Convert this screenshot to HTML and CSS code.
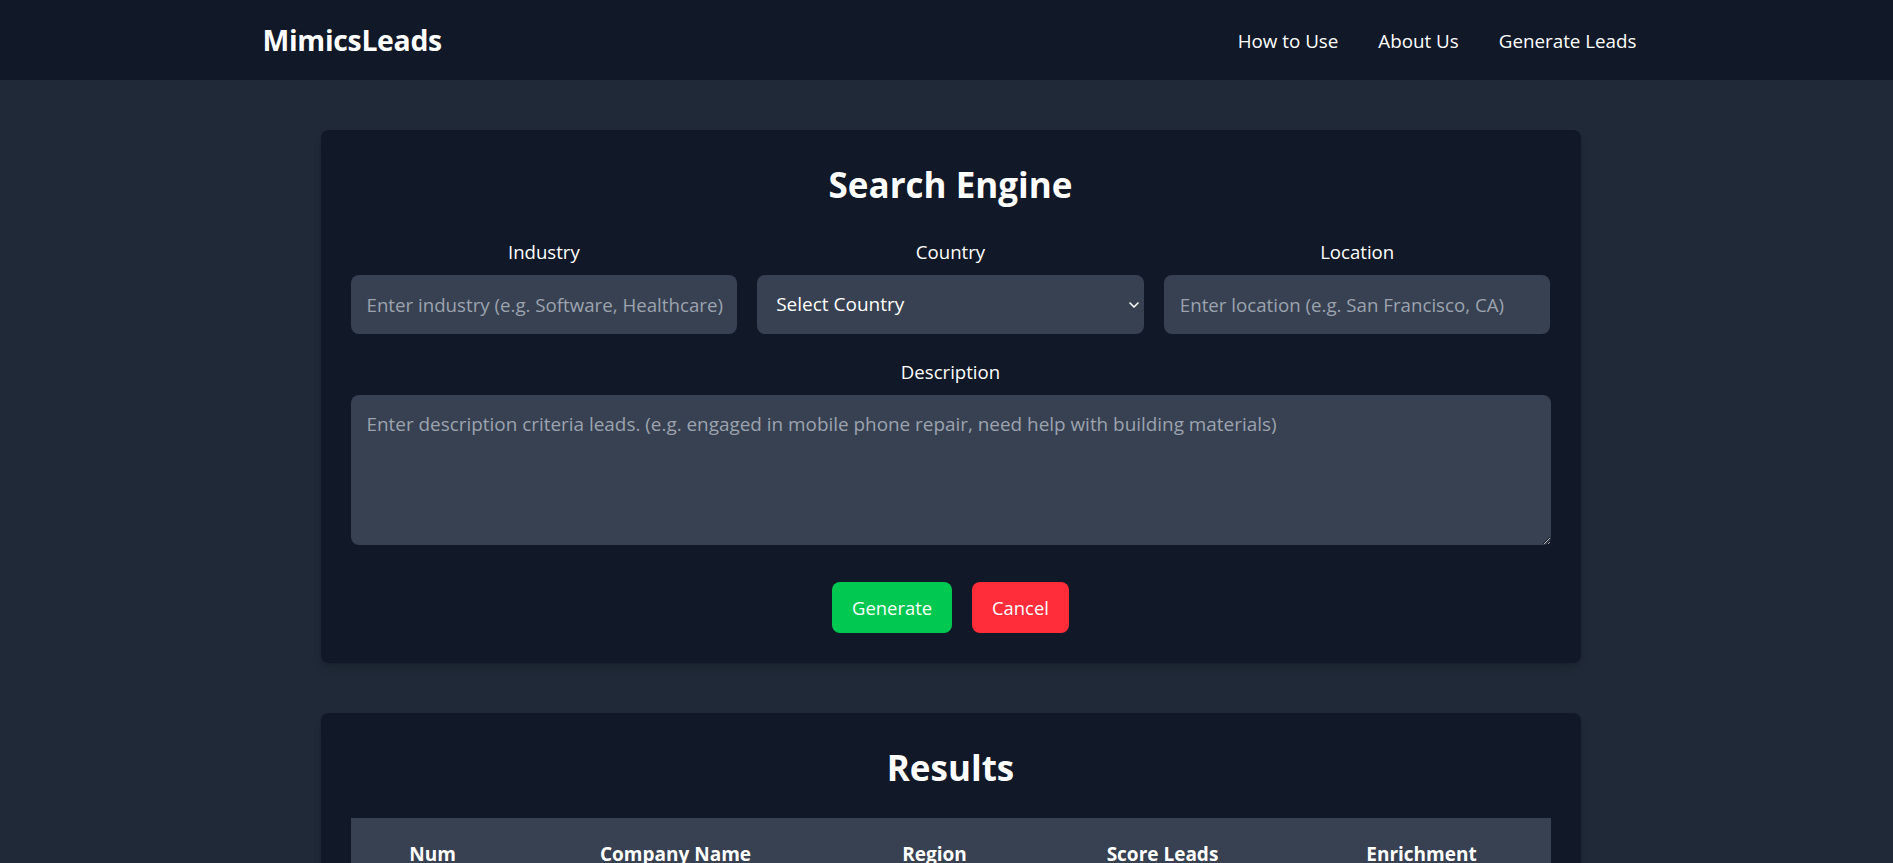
FILE: index.html
```html
<!DOCTYPE html>
<html lang="en">
<head>
<meta charset="utf-8">
<title>MimicsLeads</title>
<link rel="stylesheet" href="styles.css">
</head>
<body>
<header class="topbar">
  <div class="topbar-inner">
    <a class="brand" href="#">MimicsLeads</a>
    <nav class="nav">
      <a href="#" class="nav-link">How to Use</a>
      <a href="#" class="nav-link">About Us</a>
      <a href="#" class="nav-link">Generate Leads</a>
    </nav>
  </div>
</header>

<main class="main">
  <section class="card search-card">
    <h2 class="card-title">Search Engine</h2>
    <div class="field-row">
      <div class="field">
        <label class="field-label" for="industry">Industry</label>
        <input class="control" id="industry" type="text" placeholder="Enter industry (e.g. Software, Healthcare)">
      </div>
      <div class="field">
        <label class="field-label" for="country">Country</label>
        <div class="select-wrap">
          <select class="control select" id="country">
            <option>Select Country</option>
          </select>
          <svg class="chevron" width="10" height="6" viewBox="0 0 10 6" aria-hidden="true"><path d="M1 1l4 4 4-4" fill="none" stroke="#ffffff" stroke-width="1.6" stroke-linecap="round" stroke-linejoin="round"/></svg>
        </div>
      </div>
      <div class="field">
        <label class="field-label" for="location">Location</label>
        <input class="control" id="location" type="text" placeholder="Enter location (e.g. San Francisco, CA)">
      </div>
    </div>
    <div class="field field-wide">
      <label class="field-label" for="description">Description</label>
      <textarea class="control textarea" id="description" placeholder="Enter description criteria leads. (e.g. engaged in mobile phone repair, need help with building materials)"></textarea>
    </div>
    <div class="actions">
      <button class="btn btn-green" type="button">Generate</button>
      <button class="btn btn-red" type="button">Cancel</button>
    </div>
  </section>

  <section class="card results-card">
    <h2 class="card-title results-title">Results</h2>
    <table class="results-table">
      <colgroup>
        <col class="c-num"><col class="c-company"><col class="c-region"><col class="c-score"><col class="c-enrich">
      </colgroup>
      <thead>
        <tr>
          <th>Num</th>
          <th>Company Name</th>
          <th>Region</th>
          <th>Score Leads</th>
          <th>Enrichment</th>
        </tr>
      </thead>
      <tbody>
        <tr><td colspan="5" class="empty">&nbsp;</td></tr>
      </tbody>
    </table>
  </section>
</main>
</body>
</html>
```

FILE: styles.css
```css
* { box-sizing: border-box; }

html, body {
  margin: 0;
  padding: 0;
  background: #1f2937;
  color: #ffffff;
  font-family: "Open Sans", "Noto Sans", "Liberation Sans", sans-serif;
}

.topbar {
  background: #111827;
  height: 80px;
  padding-left: 8px;
}

.topbar-inner {
  width: 1372px;
  height: 80px;
  margin: 0 auto;
  display: flex;
  align-items: center;
  justify-content: space-between;
}

.brand {
  color: #ffffff;
  text-decoration: none;
  font-weight: 700;
  font-size: 28.4px;
  letter-spacing: -0.3px;
  margin-left: -2px;
}

.nav {
  display: flex;
  gap: 40px;
  padding-top: 2px;
}

.nav-link {
  color: #ffffff;
  text-decoration: none;
  font-size: 18.8px;
}

.main {
  padding: 50px 0 40px 8px;
  display: flex;
  flex-direction: column;
  align-items: center;
  gap: 50px;
}

.card {
  width: 1260px;
  background: #111827;
  border-radius: 8px;
  padding: 30px;
  box-shadow: 0 6px 12px -4px rgba(0,0,0,0.18), 0 2px 4px -2px rgba(0,0,0,0.15);
}

.card-title {
  margin: 0 0 28px;
  text-align: center;
  font-size: 35px;
  line-height: 50px;
  font-weight: 700;
}

.field-row {
  display: grid;
  grid-template-columns: repeat(3, 1fr);
  gap: 20px;
}

.field {
  display: flex;
  flex-direction: column;
  align-items: stretch;
}

.field-wide {
  margin-top: 24px;
}

.field-label {
  text-align: center;
  font-size: 18.6px;
  line-height: 27px;
  margin-bottom: 10px;
}

.control {
  width: 100%;
  height: 59px;
  background: #374151;
  color: #ffffff;
  border: none;
  border-radius: 8px;
  padding: 16px 12px 16px 16px;
  font-family: inherit;
  font-size: 18.7px;
  line-height: 27px;
  outline: none;
}

.control::placeholder {
  color: #9ca3af;
}

.select-wrap {
  position: relative;
}

.select {
  appearance: none;
  -webkit-appearance: none;
  padding-left: 19px;
  font-size: 19px;
  cursor: pointer;
}

.chevron {
  position: absolute;
  right: 5px;
  top: 27px;
  pointer-events: none;
}

.textarea {
  height: 150px;
  resize: vertical;
  display: block;
  font-size: 18.9px;
}

.actions {
  display: flex;
  justify-content: center;
  gap: 20px;
  margin-top: 37px;
}

.btn {
  border: none;
  border-radius: 8px;
  color: #ffffff;
  font-family: inherit;
  font-size: 18.4px;
  line-height: 27px;
  padding: 12px 20px;
  cursor: pointer;
}

.btn-green { background: #00c851; }
.btn-red { background: #ff2d3a; }

.results-title {
  margin: 0 0 25px;
}

.results-table {
  width: 100%;
  border-collapse: collapse;
  table-layout: fixed;
}

.c-num { width: 164px; }
.c-company { width: 322px; }
.c-region { width: 196px; }
.c-score { width: 260px; }
.c-enrich { width: 258px; }

.results-table thead tr {
  background: #374151;
}

.results-table th {
  font-size: 19px;
  font-weight: 700;
  line-height: 28px;
  padding: 22px 8px;
  text-align: center;
}

.empty {
  height: 60px;
}
```
